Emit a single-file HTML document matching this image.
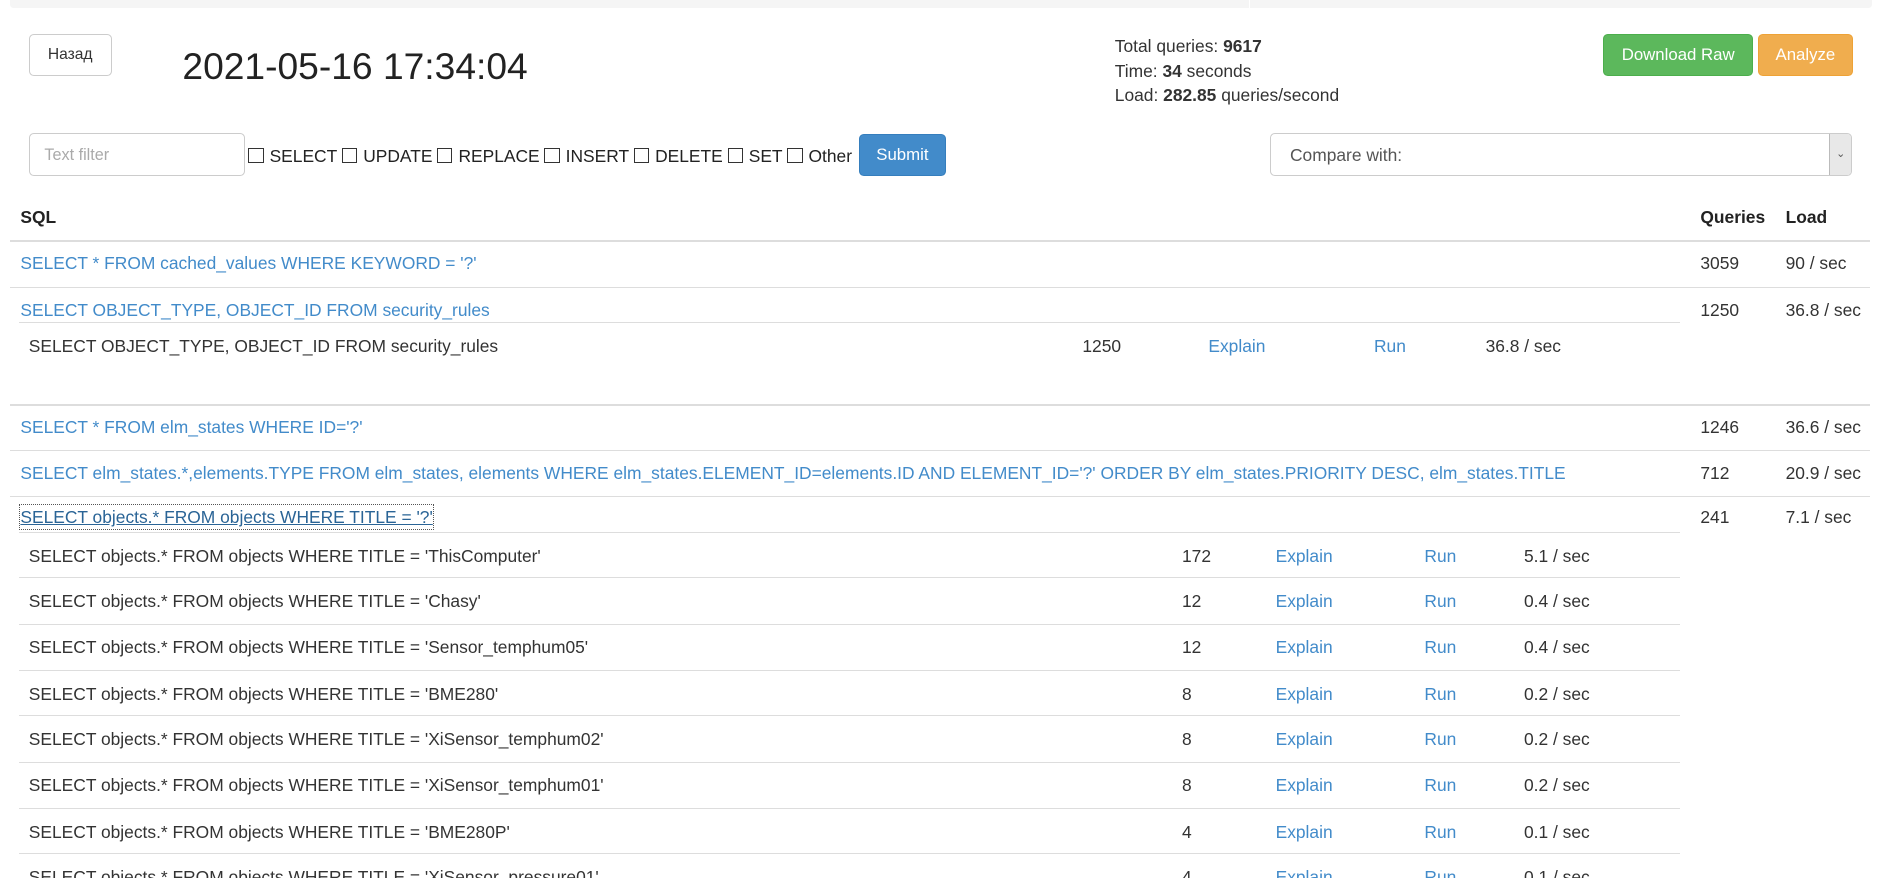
<!DOCTYPE html>
<html><head><meta charset="utf-8"><style>
html,body{margin:0;padding:0;background:#fff;overflow:hidden}
body{width:1882px;height:878px}
#w{position:relative;width:1568px;height:732px;zoom:1.2;font-family:"Liberation Sans",Arial,sans-serif;font-size:14.5px;color:#333}
.a{position:absolute;white-space:nowrap;line-height:20px}
.l{color:#428bca}
.hr{position:absolute;height:1px;background:#ddd}
.btn{position:absolute;border-radius:4px;box-sizing:border-box;text-align:center;font-size:14px}
.cb{display:inline-block;width:11px;height:11px;border:1px solid #333;vertical-align:-1px;margin:0 5px 0 4px;background:#fff}
</style></head><body><div id="w">
<div style="position:absolute;left:8px;top:0;width:1552px;height:7px;background:#f5f5f5;border-radius:0 0 3px 3px"></div>
<div style="position:absolute;left:1041px;top:0;width:1px;height:7px;background:#fff"></div>

<div class="btn" style="left:24px;top:28px;width:69px;height:35px;border:1px solid #ccc;line-height:33px;color:#333;font-size:13px">Назад</div>
<div class="a" style="left:152px;top:37px;font-size:31px;line-height:38px;color:#222">2021-05-16 17:34:04</div>

<div class="a" style="left:929px;top:28px">Total queries: <b>9617</b></div>
<div class="a" style="left:929px;top:49px">Time: <b>34</b> seconds</div>
<div class="a" style="left:929px;top:69px">Load: <b>282.85</b> queries/second</div>

<div class="btn" style="left:1336px;top:28px;width:125px;height:35px;background:#5cb85c;border:1px solid #4cae4c;color:#fff;line-height:33px">Download Raw</div>
<div class="btn" style="left:1465px;top:28px;width:79px;height:35px;background:#f0ad4e;border:1px solid #eea236;color:#fff;line-height:33px">Analyze</div>

<div style="position:absolute;left:24px;top:111px;width:180px;height:36px;box-sizing:border-box;border:1px solid #ccc;border-radius:4px"></div>
<div class="a" style="left:37px;top:119px;color:#aaa;font-size:13.5px">Text filter</div>
<div class="a" style="left:203px;top:120px;color:#222"><span class="cb"></span>SELECT<span class="cb"></span>UPDATE<span class="cb"></span>REPLACE<span class="cb"></span>INSERT<span class="cb"></span>DELETE<span class="cb"></span>SET<span class="cb"></span>Other</div>
<div class="btn" style="left:716px;top:112px;width:72px;height:35px;background:#428bca;border:1px solid #357ebd;color:#fff;line-height:33px">Submit</div>

<div style="position:absolute;left:1058px;top:111px;width:485px;height:36px;box-sizing:border-box;border:1px solid #ccc;border-radius:4px"></div>
<div style="position:absolute;left:1524px;top:112px;width:18px;height:34px;background:#e8e8e8;border-left:1px solid #bbb;border-radius:0 3px 3px 0;font-size:9px;text-align:center;line-height:34px;color:#555">&#8964;</div>
<div class="a" style="left:1075px;top:119px;color:#555">Compare with:</div>

<div class="a" style="left:17px;top:171px;font-weight:bold;color:#222">SQL</div>
<div class="a" style="left:1417px;top:171px;font-weight:bold;color:#222">Queries</div>
<div class="a" style="left:1488px;top:171px;font-weight:bold;color:#222">Load</div>
<div style="position:absolute;left:8px;top:200px;width:1550px;height:2px;background:#ddd"></div>

<div class="a l" style="left:17px;top:209px">SELECT * FROM cached_values WHERE KEYWORD = '?'</div>
<div class="a" style="left:1417px;top:209px">3059</div><div class="a" style="left:1488px;top:209px">90 / sec</div>
<div class="hr" style="left:8px;top:239px;width:1550px"></div>

<div class="a l" style="left:17px;top:248px">SELECT OBJECT_TYPE, OBJECT_ID FROM security_rules</div>
<div class="a" style="left:1417px;top:248px">1250</div><div class="a" style="left:1488px;top:248px">36.8 / sec</div>
<div class="hr" style="left:16px;top:268px;width:1384px"></div>
<div class="a" style="left:24px;top:278px">SELECT OBJECT_TYPE, OBJECT_ID FROM security_rules</div>
<div class="a" style="left:902px;top:278px">1250</div>
<div class="a l" style="left:1007px;top:278px">Explain</div>
<div class="a l" style="left:1145px;top:278px">Run</div>
<div class="a" style="left:1238px;top:278px">36.8 / sec</div>
<div class="hr" style="left:8px;top:337px;width:1550px"></div>

<div class="a l" style="left:17px;top:346px">SELECT * FROM elm_states WHERE ID='?'</div>
<div class="a" style="left:1417px;top:346px">1246</div><div class="a" style="left:1488px;top:346px">36.6 / sec</div>
<div class="hr" style="left:8px;top:375px;width:1550px"></div>

<div class="a l" style="left:17px;top:384px">SELECT elm_states.*,elements.TYPE FROM elm_states, elements WHERE elm_states.ELEMENT_ID=elements.ID AND ELEMENT_ID='?' ORDER BY elm_states.PRIORITY DESC, elm_states.TITLE</div>
<div class="a" style="left:1417px;top:384px">712</div><div class="a" style="left:1488px;top:384px">20.9 / sec</div>
<div class="hr" style="left:8px;top:413px;width:1550px"></div>

<div class="a" style="left:17px;top:421px;color:#2a6496;text-decoration:underline;outline:1px dotted #555">SELECT objects.* FROM objects WHERE TITLE = '?'</div>
<div class="a" style="left:1417px;top:421px">241</div><div class="a" style="left:1488px;top:421px">7.1 / sec</div>

<div class="hr" style="left:16px;top:443px;width:1384px"></div>
<div class="a" style="left:24px;top:453px">SELECT objects.* FROM objects WHERE TITLE = 'ThisComputer'</div>
<div class="a" style="left:985px;top:453px">172</div><div class="a l" style="left:1063px;top:453px">Explain</div><div class="a l" style="left:1187px;top:453px">Run</div><div class="a" style="left:1270px;top:453px">5.1 / sec</div>
<div class="hr" style="left:16px;top:481px;width:1384px"></div>
<div class="a" style="left:24px;top:491px">SELECT objects.* FROM objects WHERE TITLE = 'Chasy'</div>
<div class="a" style="left:985px;top:491px">12</div><div class="a l" style="left:1063px;top:491px">Explain</div><div class="a l" style="left:1187px;top:491px">Run</div><div class="a" style="left:1270px;top:491px">0.4 / sec</div>
<div class="hr" style="left:16px;top:520px;width:1384px"></div>
<div class="a" style="left:24px;top:529px">SELECT objects.* FROM objects WHERE TITLE = 'Sensor_temphum05'</div>
<div class="a" style="left:985px;top:529px">12</div><div class="a l" style="left:1063px;top:529px">Explain</div><div class="a l" style="left:1187px;top:529px">Run</div><div class="a" style="left:1270px;top:529px">0.4 / sec</div>
<div class="hr" style="left:16px;top:558px;width:1384px"></div>
<div class="a" style="left:24px;top:568px">SELECT objects.* FROM objects WHERE TITLE = 'BME280'</div>
<div class="a" style="left:985px;top:568px">8</div><div class="a l" style="left:1063px;top:568px">Explain</div><div class="a l" style="left:1187px;top:568px">Run</div><div class="a" style="left:1270px;top:568px">0.2 / sec</div>
<div class="hr" style="left:16px;top:596px;width:1384px"></div>
<div class="a" style="left:24px;top:606px">SELECT objects.* FROM objects WHERE TITLE = 'XiSensor_temphum02'</div>
<div class="a" style="left:985px;top:606px">8</div><div class="a l" style="left:1063px;top:606px">Explain</div><div class="a l" style="left:1187px;top:606px">Run</div><div class="a" style="left:1270px;top:606px">0.2 / sec</div>
<div class="hr" style="left:16px;top:635px;width:1384px"></div>
<div class="a" style="left:24px;top:644px">SELECT objects.* FROM objects WHERE TITLE = 'XiSensor_temphum01'</div>
<div class="a" style="left:985px;top:644px">8</div><div class="a l" style="left:1063px;top:644px">Explain</div><div class="a l" style="left:1187px;top:644px">Run</div><div class="a" style="left:1270px;top:644px">0.2 / sec</div>
<div class="hr" style="left:16px;top:673px;width:1384px"></div>
<div class="a" style="left:24px;top:683px">SELECT objects.* FROM objects WHERE TITLE = 'BME280P'</div>
<div class="a" style="left:985px;top:683px">4</div><div class="a l" style="left:1063px;top:683px">Explain</div><div class="a l" style="left:1187px;top:683px">Run</div><div class="a" style="left:1270px;top:683px">0.1 / sec</div>
<div class="hr" style="left:16px;top:711px;width:1384px"></div>
<div class="a" style="left:24px;top:721px">SELECT objects.* FROM objects WHERE TITLE = 'XiSensor_pressure01'</div>
<div class="a" style="left:985px;top:721px">4</div><div class="a l" style="left:1063px;top:721px">Explain</div><div class="a l" style="left:1187px;top:721px">Run</div><div class="a" style="left:1270px;top:721px">0.1 / sec</div>
</div></body></html>
